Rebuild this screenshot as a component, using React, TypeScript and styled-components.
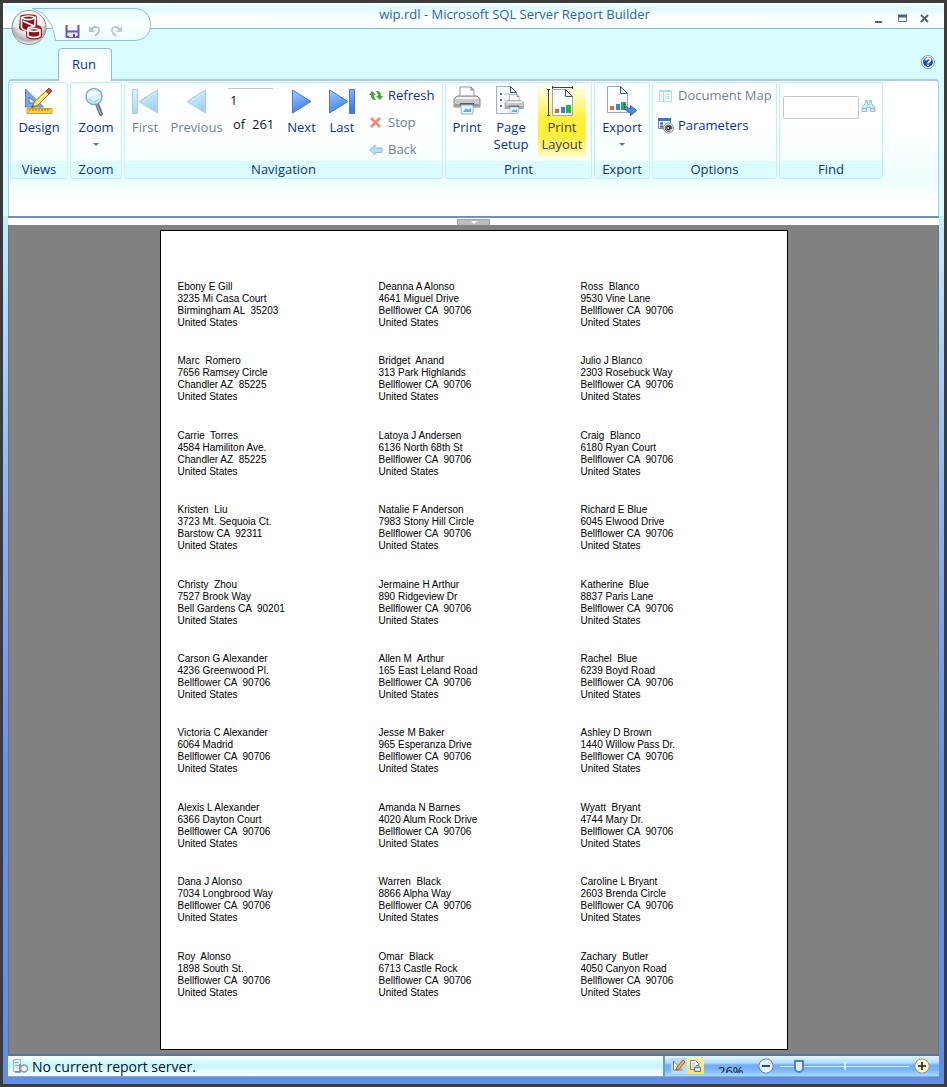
import React from "react";
import styled, { createGlobalStyle, css } from "styled-components";

const GlobalStyle = createGlobalStyle`
  *, *::before, *::after { box-sizing: border-box; }
  body { margin: 0; background: #3b3b3b; }
  button, input { font: inherit; color: inherit; }
`;

const Window = styled.div`
  display: flex;
  flex-direction: column;
  min-height: 100vh;
  min-width: 900px;
  padding: 0 5px 7px;
  border: 3px solid #3b3b3b;
  background: linear-gradient(to bottom, #d8fbff 0, #c4ecff 220px, #8fb8f4 480px, #6691ea 760px, #5f8ee8 100%);
  font-family: "Open Sans", "Noto Sans", sans-serif;
  font-size: 13px;
  line-height: 17px;
  color: #0a2f9c;
`;

const Chrome = styled.header`
  position: relative;
  margin: 0 -5px;
  padding: 0 5px;
  background: linear-gradient(to bottom, #d6fbff, #d9fdff 30px, #d6fafe);
`;

const TitleBar = styled.div`
  display: flex;
  align-items: center;
  height: 26px;
  margin: 0 -5px;
  padding: 0 7px 0 166px;
  border-bottom: 1px solid #86b3e0;
  background: linear-gradient(to bottom, #ffffff 0, #dcfcff 4px, #f4ffff 12px, #ffffff 16px, #fcffff 100%);
`;

const Title = styled.h1`
  flex: 1;
  margin: 0;
  padding: 0 8px 3px 0;
  font-size: 13px;
  font-weight: 400;
  line-height: 17px;
  text-align: center;
  color: #2a62b4;
`;

const WindowButton = styled.button`
  display: flex;
  width: 23px;
  height: 20px;
  padding: 7px 0 0 6px;
  border: 0;
  background: none;
`;

const QuickAccess = styled.div`
  position: absolute;
  left: 7px;
  top: 4px;
  width: 144px;
  height: 42px;
`;

const QuickArt = styled.svg`
  display: block;
`;

const QuickButtons = styled.div`
  position: absolute;
  left: 55px;
  top: 16px;
  display: flex;
  gap: 6px;
`;

const QuickButton = styled.button`
  display: flex;
  width: 16px;
  height: 16px;
  padding: 0;
  border: 0;
  background: none;
`;

const OrbButton = styled.button`
  position: absolute;
  left: 0;
  top: 1px;
  width: 38px;
  height: 40px;
  padding: 0;
  border: 0;
  background: none;
`;

const TabRow = styled.div`
  display: flex;
  align-items: flex-end;
  justify-content: space-between;
  height: 50px;
  padding: 0 3px 0 50px;
`;

const Tab = styled.button`
  position: relative;
  z-index: 1;
  width: 54px;
  height: 33px;
  margin-bottom: -2px;
  padding: 0 2px 2px 0;
  border: 1px solid #8db9ee;
  border-bottom: 0;
  border-radius: 4px 4px 0 0;
  background: linear-gradient(to bottom, #f4ffff, #ffffff);
`;

const HelpButton = styled.button`
  display: flex;
  width: 16px;
  height: 16px;
  margin-bottom: 9px;
  padding: 0;
  border: 0;
  background: none;
`;

const Ribbon = styled.section`
  display: flex;
  align-items: flex-start;
  gap: 2px;
  height: 137px;
  padding: 1px 1px 0;
  border: 1px solid #a6cdf5;
  border-top-width: 2px;
  border-bottom: 0;
  border-radius: 4px 4px 0 0;
  background: linear-gradient(to bottom, #ffffff 0, #fcffff 50px, #f0ffff 100px, #ffffff 118px);
`;

const Group = styled.section<{ $width: number }>`
  display: flex;
  flex-direction: column;
  width: ${(p) => p.$width}px;
  height: 97px;
  border: 1px solid #c3f0f8;
  border-radius: 2px;
  background: linear-gradient(to bottom, #ffffff, #fbfeff 60%, #f4ffff);
  box-shadow: inset 0 0 0 1px #f2ffff;
`;

const GroupBody = styled.div<{ $inset?: number }>`
  display: flex;
  flex: 1;
  justify-content: ${(p) => (p.$inset === undefined ? "center" : "flex-start")};
  padding-left: ${(p) => p.$inset ?? 0}px;
`;

const GroupCaption = styled.h2`
  margin: 0;
  font-size: 13px;
  font-weight: 400;
  line-height: 17px;
  text-align: center;
  background: #dcfdff;
`;

const BigButton = styled.button<{ $width: number; $active?: boolean }>`
  display: flex;
  flex-direction: column;
  align-items: center;
  width: ${(p) => p.$width}px;
  height: 73px;
  margin-top: 2px;
  padding: 0;
  border: 0;
  background: none;
  &:disabled { color: #71809a; }
  ${(p) =>
    p.$active &&
    css`
      margin-left: 4px;
      color: #45403e;
      background: linear-gradient(to bottom, #fffff0 0, #fff8a0 16px, #fff03c 34px, #ffee34 50px, #fff79a 66px, #fffce0 100%);
    `}
`;

const BigIcon = styled.svg`
  flex: none;
  margin-bottom: 2px;
`;

const Caret = styled.span`
  width: 0;
  height: 0;
  margin-top: 7px;
  border: 3px solid transparent;
  border-top-color: #3f78c8;
  border-bottom: 0;
`;

const Pager = styled.div`
  width: 47px;
  padding-top: 5px;
  color: #10131c;
`;

const PageInput = styled.input`
  display: block;
  width: 45px;
  height: 23px;
  padding: 0 2px;
  border: 0;
  border-top: 1px solid #c3c9d0;
  background: transparent;
`;

const PageTotal = styled.div`
  padding: 5px 0 0 5px;
  white-space: pre;
`;

const List = styled.div<{ $gap: number; $inset?: number }>`
  display: flex;
  flex-direction: column;
  gap: ${(p) => p.$gap}px;
  padding: 4px 0 0 ${(p) => p.$inset ?? 0}px;
`;

const ListButton = styled.button`
  display: flex;
  align-items: center;
  gap: 4px;
  height: 17px;
  padding: 0;
  border: 0;
  background: none;
  white-space: nowrap;
  &:disabled { color: #71809a; }
`;

const FindInput = styled.input`
  width: 76px;
  height: 23px;
  margin: 13px 2px 0 0;
  border: 1px solid #c4c8cc;
  border-radius: 2px;
  background: #ffffff;
`;

const FindButton = styled.button`
  width: 16px;
  height: 16px;
  margin-top: 15px;
  padding: 0;
  border: 0;
  background: none;
`;

const Splitter = styled.div`
  display: flex;
  justify-content: center;
  height: 9px;
  border-top: 2px solid #6f91ba;
  background: #ffffff;
`;

const SplitHandle = styled.button`
  display: flex;
  justify-content: center;
  width: 33px;
  height: 6px;
  margin-top: 1px;
  padding: 1px 0 0;
  border: 1px solid #a3a3a3;
  border-bottom: 0;
  background: #bdbdbd;
`;

const SplitArrow = styled.span`
  border: 3px solid transparent;
  border-top-color: #ffffff;
  border-bottom: 0;
`;

const Stage = styled.main`
  display: flex;
  flex: 1;
  justify-content: center;
  padding: 5px 0 4px;
  border-left: 1px solid #707070;
  border-right: 1px solid #707070;
  background: #828282;
`;

const Paper = styled.article`
  display: grid;
  grid-template-columns: 201px 202px 1fr;
  grid-auto-rows: 1fr;
  width: 628px;
  padding: 50px 17px 24px;
  border: 1px solid #000000;
  background: #fefefe;
`;

const Label = styled.address`
  font-family: "Liberation Sans", Arial, sans-serif;
  font-size: 10px;
  font-style: normal;
  line-height: 12px;
  white-space: pre;
  color: #000000;
`;

const StatusBar = styled.footer`
  display: flex;
  height: 23px;
  border-top: 2px solid #5c7599;
  border-bottom: 1px solid #8ea6c8;
`;

const StatusText = styled.div`
  display: flex;
  flex: 1;
  align-items: center;
  gap: 3px;
  padding-left: 4px;
  font-size: 14px;
  color: #061236;
  background: linear-gradient(to bottom, #ffffff 0, #d4fafc 6px, #c6f4fa 10px, #e2fdff 15px, #ffffff 100%);
`;

const StatusTools = styled.div`
  display: flex;
  align-items: center;
  width: 276px;
  padding: 0 9px 0 6px;
  border-left: 2px solid #6b9ad8;
  background: linear-gradient(to bottom, #e4f6ff 0, #b0dcff 7px, #74acf6 9px, #7db5f8 14px, #a4dcff 100%);
`;

const ViewButton = styled.button<{ $active?: boolean }>`
  display: flex;
  align-items: center;
  justify-content: center;
  width: 17px;
  height: 16px;
  padding: 0;
  border: 0;
  background: ${(p) => (p.$active ? "linear-gradient(to bottom, #fff6a8, #ffdf60)" : "#b5dcfb")};
`;

const ZoomValue = styled.output`
  width: 40px;
  height: 12px;
  margin: 2px 8px 0;
  overflow: hidden;
  line-height: 21px;
  text-align: center;
  color: #0a1430;
`;

const RoundButton = styled.button`
  display: flex;
  width: 16px;
  height: 16px;
  padding: 0;
  border: 0;
  background: none;
`;

const ZoomSlider = styled.input`
  flex: 1;
  height: 16px;
  margin: 0 5px 0 6px;
  appearance: none;
  background:
    linear-gradient(#d6efff, #d6efff) center / 2px 8px no-repeat,
    linear-gradient(#d6efff, #d6efff) center / 100% 1px no-repeat;
  &::-webkit-slider-thumb {
    appearance: none;
    width: 10px;
    height: 13px;
    border: 2px solid #4d83cc;
    border-radius: 1px 1px 5px 5px;
    background: #e2f5ff;
  }
`;

function Orb() {
  return (
    <svg width="38" height="40" viewBox="0 0 38 40">
      <defs>
        <radialGradient id="orb" cx="50%" cy="32%" r="66%">
          <stop offset="0" stopColor="#ffffff" />
          <stop offset="0.6" stopColor="#e4e6ea" />
          <stop offset="0.85" stopColor="#b3adb1" />
          <stop offset="1" stopColor="#e8eef4" />
        </radialGradient>
      </defs>
      <circle cx="19" cy="19.500" r="17" fill="url(#orb)" stroke="#8b9099" />
      <path d="M3 20C10 17 27 23 35 18A16 16 0 0 0 3 20" fill="#ffffff" opacity="0.5" />
      <g stroke="#b3141c" strokeWidth="4" fill="#b3141c" strokeLinejoin="round">
        <path d="M12 9c4-1 9-1 13 0v7l1 3c3 0 4 1 4 3v6c-3 2-9 2-12 0v-6l-7-2z" />
      </g>
      <g stroke="#ffffff" strokeWidth="1.600" fill="#8d1218" strokeLinejoin="round">
        <path d="M11.500 9.500v10c1 2 4 3 6 3l1-3 6-1 1-9c-4-2-10-2-14 0z" />
        <path d="M12 10c4 2 9 2 13 0M13 13l11 5" fill="none" />
        <path d="M18 22v6c3 2 9 2 12 0v-6c-3-2-9-2-12 0z" />
        <path d="M18 22c3 2 9 2 12 0" fill="none" />
      </g>
    </svg>
  );
}

function DesignIcon() {
  return (
    <BigIcon width="32" height="32" viewBox="0 0 32 32">
      <path d="M2.500 4v18h18z" fill="#7daaf0" stroke="#4a7fd8" />
      <path d="M6 12v6h7z" fill="#e8f4ff" stroke="#3c6fc6" />
      <path d="M4 23.500h25v5H4z" fill="#f9d24a" stroke="#d29b22" />
      <path d="M7 24v2m3-2v2m3-2v2m3-2v2m3-2v2m3-2v2m3-2v2" stroke="#976c12" />
      <path d="M9 22l3-6L24 5l3 3-12 12-6 3z" fill="#ffe168" stroke="#9b7733" />
      <path d="M13 18L25 7" stroke="#fffbd0" />
      <path d="M23 6l3-3 3 3-3 3z" fill="#d84848" stroke="#8d4550" />
      <path d="M8 23l2-3 2 1z" fill="#59544b" />
    </BigIcon>
  );
}

function ZoomIcon() {
  return (
    <BigIcon width="32" height="32" viewBox="0 0 32 32">
      <path d="M17 19l4 10" stroke="#677080" strokeWidth="4" strokeLinecap="round" />
      <path d="M17 20l4 9" stroke="#c7ccd3" strokeWidth="1" />
      <circle cx="14" cy="11.500" r="8" fill="#d8f3ff" stroke="#87a7ca" strokeWidth="1.500" />
      <path d="M8 11c1-6 7-6 11-3-2 5-6 1-11 3" fill="#ffffff" />
      <path d="M9 14c3 4 7 4 10 0" stroke="#a6d8f7" strokeWidth="2" fill="none" />
    </BigIcon>
  );
}

type ArrowKind = "first" | "previous" | "next" | "last";

function ArrowIcon({ kind }: { kind: ArrowKind }) {
  const pale = kind === "first" || kind === "previous";
  const id = "arrow-" + kind;
  const stroke = pale ? "#9ccdf2" : "#4278d8";
  return (
    <BigIcon width="32" height="32" viewBox="0 0 32 32">
      <defs>
        <linearGradient id={id} x1="0" y1="0" x2="0.4" y2="1">
          <stop offset="0" stopColor={pale ? "#e0f8ff" : "#a6d0ff"} />
          <stop offset="1" stopColor={pale ? "#a0d2f6" : "#3b7ce8"} />
        </linearGradient>
      </defs>
      <g fill={`url(#${id})`} stroke={stroke}>
        {kind === "first" && <path d="M3.500 4.500h5v24h-5zM28.500 5v23L10 16.500z" />}
        {kind === "previous" && <path d="M24.500 5v23L6 16.500z" />}
        {kind === "next" && <path d="M6.500 5v23L25 16.500z" />}
        {kind === "last" && <path d="M3.500 5v23L22 16.500zM23.500 4.500h5v24h-5z" />}
      </g>
    </BigIcon>
  );
}

function PrinterShape() {
  return (
    <g>
      <path d="M9 2h11l3 3v8H9z" fill="#ffffff" stroke="#8a97aa" />
      <path d="M20 2v3h3" fill="none" stroke="#6c7a90" />
      <path d="M3 14l3-3h20l3 3v8H3z" fill="#c9c9cb" stroke="#85868a" />
      <path d="M5 13h22" stroke="#f6f6f6" strokeWidth="2" />
      <path d="M4 19h24v2H4z" fill="#97989c" />
      <path d="M9 18h14v3H9z" fill="#5a5d64" />
      <path d="M10 20h12v9H10z" fill="#e8f6ff" stroke="#9ab4d2" />
      <path d="M12 27l3-4 2 2 3-2v4z" fill="#4fb4f0" />
    </g>
  );
}

function PrintIcon() {
  return (
    <BigIcon width="32" height="32" viewBox="0 0 32 32">
      <PrinterShape />
    </BigIcon>
  );
}

function PageSetupIcon() {
  return (
    <BigIcon width="32" height="32" viewBox="0 0 32 32">
      <path d="M1.500 1.500h14l6 6v21h-20z" fill="#fafdff" stroke="#9fb2d0" />
      <path d="M15.500 1.500v6h6z" fill="#d8e8fa" stroke="#3f5478" />
      <path d="M5 9h2m-2 6h2m-2 6h2" stroke="#5f7396" strokeWidth="2" />
      <path d="M9 9h5m-5 6h2" stroke="#b8c6dc" />
      <g transform="translate(8 8) scale(0.7)">
        <PrinterShape />
      </g>
    </BigIcon>
  );
}

function ChartPage() {
  return (
    <g>
      <path d="M6.500 4.500h13l7 7v19h-20z" fill="#fdfeff" stroke="#93a8cc" />
      <path d="M19.500 4.500v7h7z" fill="#dceafa" stroke="#3f5478" />
      <path d="M9 24h4v4H9z" fill="#f0602c" />
      <path d="M15 22h4v6h-4z" fill="#2f84e4" />
      <path d="M20 20h5v8h-5z" fill="#2eb42e" />
    </g>
  );
}

function PrintLayoutIcon() {
  return (
    <BigIcon width="32" height="32" viewBox="0 0 32 32">
      <ChartPage />
      <path d="M7 2.500h20M6.500 1v3m20-3v3M2.500 5v25M1 4.500h3M1 30.500h3" stroke="#333e50" fill="none" />
    </BigIcon>
  );
}

function ExportIcon() {
  return (
    <BigIcon width="32" height="32" viewBox="0 0 32 32">
      <g transform="translate(-5 -3)">
        <ChartPage />
      </g>
      <path d="M18.500 18.500c-1 5 2 9 6 9v3l6-5-6-5v3c-3 0-5-2-6-5z" fill="#4b8ae8" stroke="#2e5cb4" />
    </BigIcon>
  );
}

function RefreshIcon() {
  return (
    <svg width="16" height="16" viewBox="0 0 16 16" fill="#43a82c">
      <path d="M1 7l3-4 4 4H6c0 2 1 4 2 5-4 0-5-2-5-5z" />
      <path d="M15 8l-3 4-4-4h2c0-2-1-4-2-5 4 0 5 2 5 5z" />
    </svg>
  );
}

function StopIcon() {
  return (
    <svg width="16" height="16" viewBox="0 0 16 16">
      <path d="M3 3l9 9M12 3l-9 9" stroke="#f38878" strokeWidth="2.500" />
    </svg>
  );
}

function BackIcon() {
  return (
    <svg width="16" height="16" viewBox="0 0 16 16">
      <path d="M1.500 8L7 3v3h7v4.500H7V13z" fill="#b6dffb" stroke="#8ebfe8" />
    </svg>
  );
}

function DocMapIcon() {
  return (
    <svg width="16" height="16" viewBox="0 0 16 16">
      <path d="M1.500 2.500h12v11h-12z" fill="#f2fbff" stroke="#bcdcf4" />
      <path d="M2 3.500h11M5.500 4v9" stroke="#b4d6f2" />
      <path d="M7 6.500h5M7 8.500h5M7 10.500h5M3 6.500h1M3 9.500h1" stroke="#c4e0f5" />
    </svg>
  );
}

function ParametersIcon() {
  return (
    <svg width="16" height="16" viewBox="0 0 16 16">
      <path d="M0.500 0.500h12v10h-12z" fill="#eef6ff" stroke="#5b86c8" />
      <path d="M0 1.500h13" stroke="#3972d2" strokeWidth="3" />
      <path d="M2 5.500h3M2 8.500h3" stroke="#2f5aa8" strokeWidth="2" />
      <circle cx="10.500" cy="10" r="5" fill="#f4f4f4" stroke="#888c92" />
      <circle cx="10.300" cy="10" r="1.600" fill="none" stroke="#222" strokeWidth="1.200" />
      <path d="M12.500 8v3c1 .8 1.600-.8 1-2.200-1.500-2.800-6.500-1.800-6.300 1.400.2 3 3.300 3.600 5.300 2.600" fill="none" stroke="#222" strokeWidth="0.900" />
    </svg>
  );
}

function BinocularsIcon() {
  return (
    <svg width="16" height="16" viewBox="0 0 16 16">
      <path d="M4.500 2.500h2v4h2v-4h2v3l3.500 4v4h-4.500v-4h-4v4H1v-4l3.500-4z" fill="#cde8fb" stroke="#97bee2" />
      <path d="M1 10.500h4m5 0h4" stroke="#8ab6e0" />
    </svg>
  );
}

function DesignSmallIcon() {
  return (
    <svg width="14" height="14" viewBox="0 0 14 14">
      <path d="M1.500 2v9h9z" fill="#f8fbff" stroke="#5f83b8" />
      <path d="M4 11l1-3 6-7 2 2-6 7z" fill="#ffb347" stroke="#a35b28" />
    </svg>
  );
}

function PreviewSmallIcon() {
  return (
    <svg width="14" height="14" viewBox="0 0 14 14">
      <path d="M2.500 1.500h5l3 3v6h-8z" fill="#ffffff" stroke="#6480aa" />
      <path d="M4 4h3M4 6h3M4 8h3" stroke="#9eb0c8" />
      <path d="M6.500 8.500h6v4h-6z" fill="#d8e8f4" stroke="#5f7898" />
      <path d="M8 6.500h3v2H8z" fill="#ffffff" stroke="#5f7898" />
    </svg>
  );
}

function ServerIcon() {
  return (
    <svg width="17" height="16" viewBox="0 0 17 16">
      <path d="M1.500 1.500h7v12h-7z" fill="#e4f4fc" stroke="#9fb4cc" />
      <path d="M3 4.500h4M3 7.500h4" stroke="#8ba4c0" />
      <path d="M8 6v8H3" stroke="#6480a8" strokeWidth="1.500" fill="none" />
      <circle cx="12" cy="10.500" r="3.500" fill="#edfaff" stroke="#8c99a8" strokeWidth="1.500" />
    </svg>
  );
}

function RoundIcon({ plus }: { plus?: boolean }) {
  return (
    <svg width="16" height="16" viewBox="0 0 16 16">
      <circle cx="8" cy="8" r="7" fill={plus ? "#fff4b0" : "#dff0ff"} stroke={plus ? "#8f8a62" : "#4d74b0"} />
      <circle cx="8" cy="8" r="6" fill="none" stroke="#ffffff" />
      <path d={plus ? "M4 8h8M8 4v8" : "M4 8h8"} stroke="#3f4658" strokeWidth="2" />
    </svg>
  );
}

function HelpIcon() {
  return (
    <svg width="16" height="16" viewBox="0 0 16 16">
      <circle cx="8" cy="8" r="6.500" fill="#ffffff" stroke="#6f94dc" />
      <circle cx="8" cy="8" r="5" fill="#1f4ccc" />
      <path d="M4 6c2-4 6-4 8 0-3 1-5 0-8 0" fill="#6a98f0" />
      <path d="M6 6.500c0-3 4.500-3 4.500-.5C10.500 8 8 7.500 8 9.500M8 10.500v1.500" fill="none" stroke="#ffffff" strokeWidth="1.600" />
    </svg>
  );
}

const cities = {
  bell: "Bellflower CA  90706",
  chandler: "Chandler AZ  85225",
};

const labels: [string, string, string][] = [
  ["Ebony E Gill", "3235 Mi Casa Court", "Birmingham AL  35203"],
  ["Deanna A Alonso", "4641 Miguel Drive", cities.bell],
  ["Ross  Blanco", "9530 Vine Lane", cities.bell],
  ["Marc  Romero", "7656 Ramsey Circle", cities.chandler],
  ["Bridget  Anand", "313 Park Highlands", cities.bell],
  ["Julio J Blanco", "2303 Rosebuck Way", cities.bell],
  ["Carrie  Torres", "4584 Hamiliton Ave.", cities.chandler],
  ["Latoya J Andersen", "6136 North 68th St", cities.bell],
  ["Craig  Blanco", "6180 Ryan Court", cities.bell],
  ["Kristen  Liu", "3723 Mt. Sequoia Ct.", "Barstow CA  92311"],
  ["Natalie F Anderson", "7983 Stony Hill Circle", cities.bell],
  ["Richard E Blue", "6045 Elwood Drive", cities.bell],
  ["Christy  Zhou", "7527 Brook Way", "Bell Gardens CA  90201"],
  ["Jermaine H Arthur", "890 Ridgeview Dr", cities.bell],
  ["Katherine  Blue", "8837 Paris Lane", cities.bell],
  ["Carson G Alexander", "4236 Greenwood Pl.", cities.bell],
  ["Allen M  Arthur", "165 East Leland Road", cities.bell],
  ["Rachel  Blue", "6239 Boyd Road", cities.bell],
  ["Victoria C Alexander", "6064 Madrid", cities.bell],
  ["Jesse M Baker", "965 Esperanza Drive", cities.bell],
  ["Ashley D Brown", "1440 Willow Pass Dr.", cities.bell],
  ["Alexis L Alexander", "6366 Dayton Court", cities.bell],
  ["Amanda N Barnes", "4020 Alum Rock Drive", cities.bell],
  ["Wyatt  Bryant", "4744 Mary Dr.", cities.bell],
  ["Dana J Alonso", "7034 Longbrood Way", cities.bell],
  ["Warren  Black", "8866 Alpha Way", cities.bell],
  ["Caroline L Bryant", "2603 Brenda Circle", cities.bell],
  ["Roy  Alonso", "1898 South St.", cities.bell],
  ["Omar  Black", "6713 Castle Rock", cities.bell],
  ["Zachary  Butler", "4050 Canyon Road", cities.bell],
];

export default function App() {
  return (
    <>
      <GlobalStyle />
      <Window>
        <Chrome>
          <TitleBar>
            <Title>wip.rdl - Microsoft SQL Server Report Builder</Title>
            <WindowButton aria-label="Minimize">
              <svg width="12" height="12"><path d="M1 9h7" stroke="#4b6384" strokeWidth="2" /></svg>
            </WindowButton>
            <WindowButton aria-label="Maximize">
              <svg width="12" height="12">
                <path d="M1.500 2.500h8v6h-8z" fill="#ffffff" stroke="#5a718f" />
                <path d="M1 3h9" stroke="#4b6384" strokeWidth="3" />
              </svg>
            </WindowButton>
            <WindowButton aria-label="Close">
              <svg width="12" height="12"><path d="M1 2l7 7M8 2l-7 7" stroke="#4b6384" strokeWidth="2" /></svg>
            </WindowButton>
          </TitleBar>
          <QuickAccess>
            <QuickArt width="144" height="42" viewBox="0 0 144 42">
              <defs>
                <linearGradient id="quick" x1="0" y1="0" x2="0" y2="1">
                  <stop offset="0" stopColor="#e2fcff" />
                  <stop offset="0.5" stopColor="#fbffff" />
                  <stop offset="1" stopColor="#ecfeff" />
                </linearGradient>
              </defs>
              <path
                d="M22 1.500H124C134 1.500 140.500 8 140.500 17.500S134 33.500 124 33.500H45.500C44 20 37 5 22 1.500z"
                fill="url(#quick)"
                stroke="#8fbcee"
              />
            </QuickArt>
            <QuickButtons>
              <QuickButton aria-label="Save">
                <svg width="16" height="16" viewBox="0 0 16 16">
                  <path d="M1.500 2v12h12V2M2 8.500h11" fill="#e9ecfa" stroke="#6c58b4" strokeWidth="2" />
                  <path d="M4 2h7v5H4z" fill="#f4f8ff" />
                  <path d="M4 10h7v4H4z" fill="#dfe6f6" />
                  <path d="M8 11h2v3H8z" fill="#5a4aa4" />
                </svg>
              </QuickButton>
              <QuickButton aria-label="Undo">
                <svg width="16" height="16" viewBox="0 0 16 16">
                  <path d="M4 7c3-5 9-3 8 1-1 3-3 4-4 5" fill="none" stroke="#b4c2d0" strokeWidth="2" />
                  <path d="M2 3v6h6z" fill="#b4c2d0" />
                </svg>
              </QuickButton>
              <QuickButton aria-label="Redo">
                <svg width="16" height="16" viewBox="0 0 16 16">
                  <path d="M11 7c-3-5-9-3-8 1 1 3 2 4 4 5" fill="none" stroke="#bccad6" strokeWidth="2" />
                  <path d="M13 3v6H7z" fill="#bccad6" />
                </svg>
              </QuickButton>
            </QuickButtons>
            <OrbButton aria-label="Report Builder menu"><Orb /></OrbButton>
          </QuickAccess>
          <TabRow>
            <Tab>Run</Tab>
            <HelpButton aria-label="Help"><HelpIcon /></HelpButton>
          </TabRow>
          <Ribbon>
            <Group $width={58}>
              <GroupBody><BigButton $width={54}><DesignIcon />Design</BigButton></GroupBody>
              <GroupCaption>Views</GroupCaption>
            </Group>
            <Group $width={52}>
              <GroupBody><BigButton $width={48}><ZoomIcon />Zoom<Caret /></BigButton></GroupBody>
              <GroupCaption>Zoom</GroupCaption>
            </Group>
            <Group $width={319}>
              <GroupBody $inset={0}>
                <BigButton $width={40} disabled><ArrowIcon kind="first" />First</BigButton>
                <BigButton $width={63} disabled><ArrowIcon kind="previous" />Previous</BigButton>
                <Pager>
                  <PageInput aria-label="Page" defaultValue="1" />
                  <PageTotal>of  261</PageTotal>
                </Pager>
                <BigButton $width={53}><ArrowIcon kind="next" />Next</BigButton>
                <BigButton $width={28}><ArrowIcon kind="last" />Last</BigButton>
                <List $gap={10} $inset={12}>
                  <ListButton><RefreshIcon />Refresh</ListButton>
                  <ListButton disabled><StopIcon />Stop</ListButton>
                  <ListButton disabled><BackIcon />Back</ListButton>
                </List>
              </GroupBody>
              <GroupCaption>Navigation</GroupCaption>
            </Group>
            <Group $width={147}>
              <GroupBody $inset={0}>
                <BigButton $width={42}><PrintIcon />Print</BigButton>
                <BigButton $width={46}><PageSetupIcon />Page<br />Setup</BigButton>
                <BigButton $width={48} $active><PrintLayoutIcon />Print<br />Layout</BigButton>
              </GroupBody>
              <GroupCaption>Print</GroupCaption>
            </Group>
            <Group $width={56}>
              <GroupBody><BigButton $width={52}><ExportIcon />Export<Caret /></BigButton></GroupBody>
              <GroupCaption>Export</GroupCaption>
            </Group>
            <Group $width={125}>
              <GroupBody $inset={5}>
                <List $gap={13}>
                  <ListButton disabled><DocMapIcon />Document Map</ListButton>
                  <ListButton><ParametersIcon />Parameters</ListButton>
                </List>
              </GroupBody>
              <GroupCaption>Options</GroupCaption>
            </Group>
            <Group $width={104}>
              <GroupBody $inset={3}>
                <FindInput aria-label="Find" />
                <FindButton aria-label="Find next"><BinocularsIcon /></FindButton>
              </GroupBody>
              <GroupCaption>Find</GroupCaption>
            </Group>
          </Ribbon>
        </Chrome>
        <Splitter>
          <SplitHandle aria-label="Toggle parameter pane"><SplitArrow /></SplitHandle>
        </Splitter>
        <Stage>
          <Paper>
            {labels.map(([name, street, city]) => (
              <Label key={name}>
                {name}<br />{street}<br />{city}<br />United States
              </Label>
            ))}
          </Paper>
        </Stage>
        <StatusBar>
          <StatusText><ServerIcon />No current report server.</StatusText>
          <StatusTools>
            <ViewButton aria-label="Design view"><DesignSmallIcon /></ViewButton>
            <ViewButton aria-label="Print layout view" $active><PreviewSmallIcon /></ViewButton>
            <ZoomValue>26%</ZoomValue>
            <RoundButton aria-label="Zoom out"><RoundIcon /></RoundButton>
            <ZoomSlider type="range" aria-label="Zoom" min={0} max={100} defaultValue={12} />
            <RoundButton aria-label="Zoom in"><RoundIcon plus /></RoundButton>
          </StatusTools>
        </StatusBar>
      </Window>
    </>
  );
}
